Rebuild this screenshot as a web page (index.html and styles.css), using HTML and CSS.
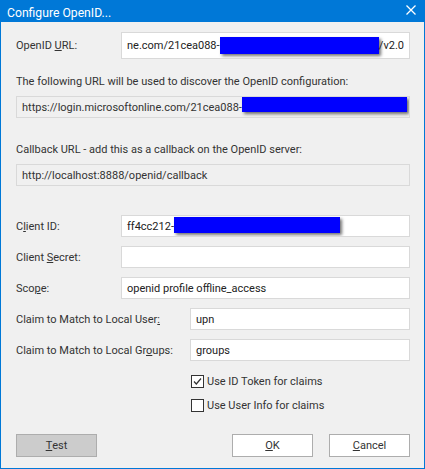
FILE: index.html
```html
<!DOCTYPE html>
<html>
<head>
<meta charset="utf-8">
<link rel="stylesheet" href="styles.css">
</head>
<body>
<div class="window">
  <div class="titlebar">
    <span class="title">Configure OpenID...</span>
    <svg class="close" width="10" height="10" viewBox="0 0 10 10"><path d="M0.5 0.5 L9.5 9.5 M9.5 0.5 L0.5 9.5" stroke="#fff" stroke-width="1.3" fill="none"/></svg>
  </div>
  <div class="content">
    <div class="row row-url">
      <label class="lbl">OpenID <u>U</u>RL:</label>
      <div class="field tall"><span>ne.com/21cea088-</span><span class="redact grow"></span><span>/v2.0</span></div>
    </div>
    <div class="note first">The following URL will be used to discover the OpenID configuration:</div>
    <div class="readonly"><span>https://login.microsoftonline.com/21cea088-</span><span class="redact r2"></span></div>
    <div class="note second">Callback URL - add this as a callback on the OpenID server:</div>
    <div class="readonly"><span>http://localhost:8888/openid/callback</span></div>

    <div class="row row-client">
      <label class="lbl">C<u>l</u>ient ID:</label>
      <div class="field"><span>ff4cc212-</span><span class="redact r3"></span></div>
    </div>
    <div class="row">
      <label class="lbl">Client <u>S</u>ecret:</label>
      <div class="field"></div>
    </div>
    <div class="row">
      <label class="lbl">Sco<u>p</u>e:</label>
      <div class="field"><span>openid profile offline_access</span></div>
    </div>
    <div class="row wide">
      <label class="lbl">Claim to Match to Local User<u>:</u></label>
      <div class="field"><span>upn</span></div>
    </div>
    <div class="row wide">
      <label class="lbl">Claim to Match to Local Gr<u>o</u>ups:</label>
      <div class="field"><span>groups</span></div>
    </div>

    <div class="check c1">
      <span class="box"><svg width="11" height="11" viewBox="0 0 11 11"><path d="M2 5.5 L4.3 8 L9 2.5" stroke="#333" stroke-width="1.2" fill="none"/></svg></span>
      <span>Use ID Token for claims</span>
    </div>
    <div class="check c2">
      <span class="box"></span>
      <span>Use User Info for claims</span>
    </div>

    <div class="buttons">
      <div class="btn test"><u>T</u>est</div>
      <div class="spacer"></div>
      <div class="btn"><u>O</u>K</div>
      <div class="btn"><u>C</u>ancel</div>
    </div>
  </div>
</div>
</body>
</html>
```
FILE: styles.css
```css
html, body {
  margin: 0;
  padding: 0;
}
body {
  width: 425px;
  height: 469px;
  overflow: hidden;
  font-family: Roboto, "Noto Sans", sans-serif;
  font-size: 11px;
  color: #333;
}
.window {
  box-sizing: border-box;
  width: 425px;
  height: 469px;
  background: #f0f0f0;
  border: 1px solid #0078d7;
  border-top: none;
  display: flex;
  flex-direction: column;
}
.titlebar {
  height: 22px;
  background: #0078d7;
  display: flex;
  align-items: center;
  padding: 0 9px 0 7px;
  margin: 0 -1px;
  flex: none;
}
.title {
  color: #fff;
  font-size: 12.2px;
  flex: 1;
  padding-top: 4px;
}
.close {
  display: block;
  margin-top: -2px;
}
.content {
  padding: 10px 14px 0 15px;
  display: flex;
  flex-direction: column;
}
.row {
  display: grid;
  grid-template-columns: 105px 1fr;
  align-items: center;
  height: 22px;
  margin-top: 9px;
}
.row.wide {
  grid-template-columns: 174px 1fr;
}
.row-url {
  margin-top: 0;
  height: 27px;
}
.row-client {
  margin-top: 29px;
}
.lbl {
  white-space: nowrap;
}
.field {
  box-sizing: border-box;
  height: 22px;
  background: #fff;
  border: 1px solid #d9d9d9;
  display: flex;
  align-items: center;
  padding: 0 5px;
  color: #222;
  white-space: nowrap;
  overflow: hidden;
}
.field.tall {
  height: 27px;
}
.note {
  height: 16px;
  line-height: 16px;
  white-space: nowrap;
}
.note.first {
  margin-top: 15px;
}
.note.second {
  margin-top: 24px;
}
.readonly {
  box-sizing: border-box;
  height: 22px;
  margin-top: 6px;
  border: 1px solid #d9d9d9;
  background: #f0f0f0;
  display: flex;
  align-items: center;
  padding: 0 0 0 5px;
  white-space: nowrap;
  overflow: hidden;
}
.redact {
  display: inline-block;
  background: #0000ff;
  height: 16px;
  box-shadow: 2px 2px 3px rgba(0, 0, 0, 0.55);
  flex: none;
}
.redact.grow {
  flex: 1;
  height: 17px;
}
.redact.r2 {
  width: 165px;
  height: 15px;
  margin-top: -6px;
}
.redact.r3 {
  width: 166px;
  height: 16px;
  margin-top: -2px;
}
.check {
  display: flex;
  align-items: center;
  height: 17px;
  margin-left: 175px;
  gap: 3px;
}
.check.c1 {
  margin-top: 12px;
}
.check.c2 {
  margin-top: 7px;
}
.box {
  box-sizing: border-box;
  width: 13px;
  height: 13px;
  border: 1px solid #333;
  background: #fff;
  display: flex;
  align-items: center;
  justify-content: center;
  flex: none;
}
.box svg {
  display: block;
}
.buttons {
  display: flex;
  margin-top: 20px;
  gap: 16px;
}
.spacer {
  flex: 1;
}
.btn {
  box-sizing: border-box;
  width: 81px;
  height: 23px;
  border: 1px solid #adadad;
  background: #fff;
  display: flex;
  align-items: center;
  justify-content: center;
}
.btn.test {
  background: #cccccc;
}
```
